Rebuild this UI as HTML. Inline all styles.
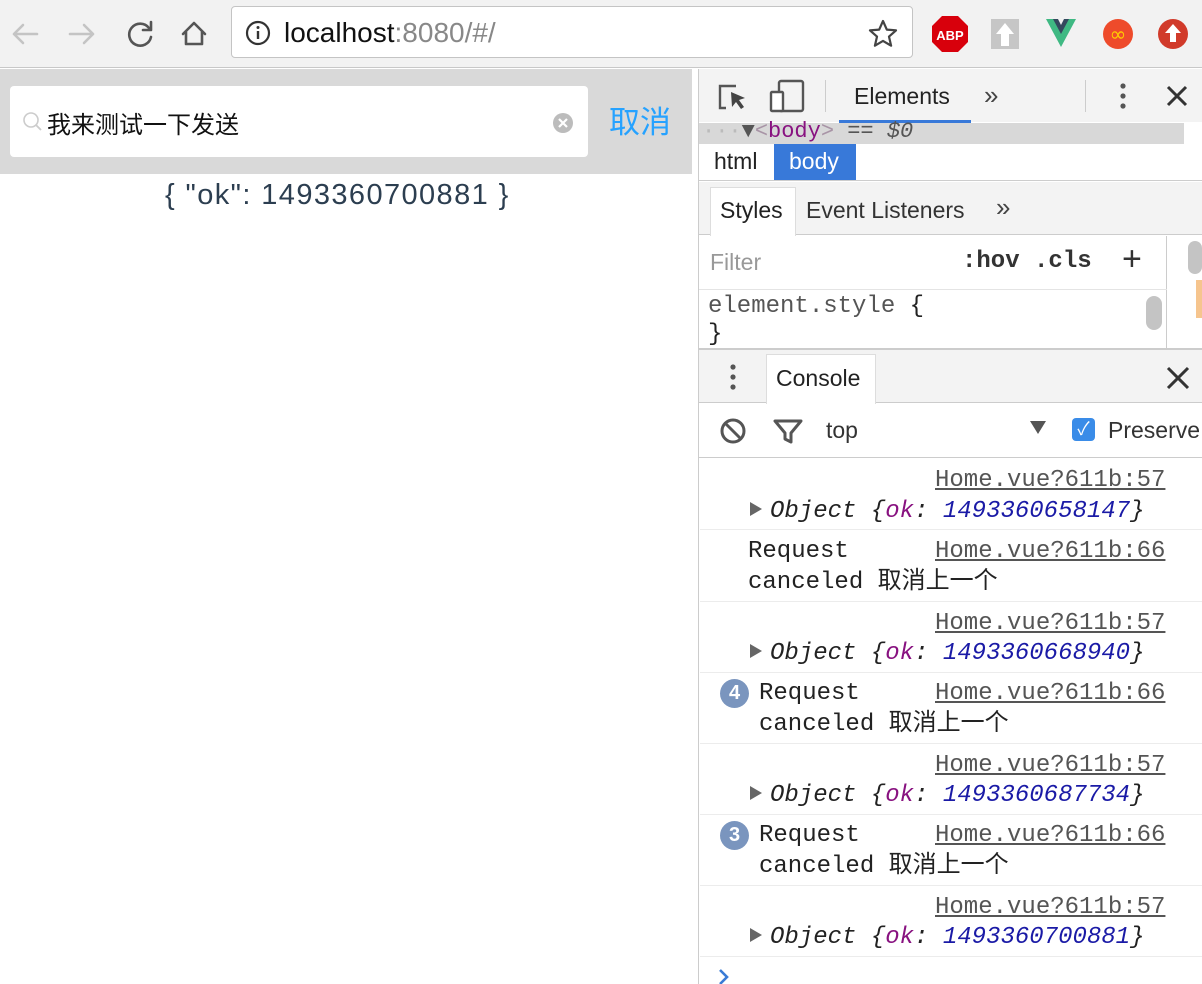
<!DOCTYPE html>
<html><head><meta charset="utf-8"><style>
*{margin:0;padding:0;box-sizing:border-box}
body{width:1202px;height:984px;overflow:hidden;position:relative;background:#fff;font-family:"Liberation Sans","Noto Sans CJK SC",sans-serif}
.a{position:absolute;white-space:nowrap}
.m{font-family:"Liberation Mono","Noto Sans CJK SC",monospace;font-size:24px;line-height:30px;color:#222}
.lk{color:#555;text-decoration:underline}
.row{position:absolute;left:700px;width:502px;height:71px;border-bottom:1px solid #ececec}
.tri{display:inline-block;width:0;height:0;border-left:12px solid #666;border-top:7px solid transparent;border-bottom:7px solid transparent;margin-right:8px;vertical-align:1px}
.badge{position:absolute;left:720px;width:29px;height:29px;border-radius:50%;background:#7a95be;color:#fff;font:bold 20px/29px "Liberation Sans",sans-serif;text-align:center}
</style></head><body>
<div class="a" style="left:0;top:0;width:1202px;height:68px;background:#f2f2f2;border-bottom:1px solid #c8c8c8"></div>
<svg class="a" style="left:0;top:0" width="230" height="68">
<g fill="none" stroke-width="2.6" stroke-linecap="round" stroke-linejoin="round">
<path d="M37 34H14M23 25l-9 9 9 9" stroke="#c4c4c4"/>
<path d="M70 34h23M84 25l9 9-9 9" stroke="#c4c4c4"/>
<path d="M149 28a11 11 0 1 0 2 9" stroke="#555"/><path d="M151 22v8h-8" stroke="#555"/>
<path d="M183 34l11-11 11 11M186 32v12h16V32" stroke="#555"/>
</g></svg>
<div class="a" style="left:231px;top:6px;width:682px;height:52px;background:#fff;border:1px solid #c4c4c4;border-radius:4px"></div>
<svg class="a" style="left:245px;top:20px" width="26" height="26"><circle cx="13" cy="13" r="11" fill="none" stroke="#333" stroke-width="2.2"/><rect x="11.8" y="11" width="2.4" height="8" fill="#333"/><circle cx="13" cy="7.5" r="1.5" fill="#333"/></svg>
<div class="a" style="left:284px;top:16px;font-size:28px;line-height:34px;color:#111">localhost<span style="color:#888">:8080/#/</span></div>
<svg class="a" style="left:868px;top:19px" width="30" height="28"><path d="M15 2l3.8 8.6 9.2.8-7 6.2 2.1 9.1L15 21.9l-8.1 4.8 2.1-9.1-7-6.2 9.2-.8z" fill="none" stroke="#444" stroke-width="2.2" stroke-linejoin="round"/></svg>
<svg class="a" style="left:930px;top:14px" width="270" height="40">
<polygon points="12,2 28,2 38,12 38,28 28,38 12,38 2,28 2,12" fill="#d8000c"/><text x="20" y="26" font-size="13" font-weight="bold" fill="#fff" text-anchor="middle" font-family="Liberation Sans">ABP</text>
<rect x="61" y="5" width="28" height="30" fill="#c6c6c6"/><path d="M75 9l-9 11h5v12h8V20h5z" fill="#fff"/>
<path d="M116 5h10l5 9 5-9h10l-15 28z" fill="#3fb983"/><path d="M123 5h5l3 6 3-6h5l-8 15z" fill="#34495e"/>
<circle cx="188" cy="20" r="15" fill="#ee4b2b"/><text x="188" y="27" font-size="20" fill="#ffcc00" text-anchor="middle" font-family="DejaVu Sans">∞</text>
<circle cx="243" cy="20" r="15" fill="#d13a2a"/><path d="M243 10l-8 9h5v9h6v-9h5z" fill="#fff"/>
</svg>
<div class="a" style="left:0;top:69px;width:692px;height:105px;background:#d9d9d9"></div>
<div class="a" style="left:10px;top:86px;width:578px;height:71px;background:#fff;border-radius:4px"></div>
<svg class="a" style="left:22px;top:111px" width="22" height="22"><circle cx="9" cy="9" r="7" fill="none" stroke="#ccc" stroke-width="1.6"/><path d="M14 14l5 5" stroke="#ccc" stroke-width="1.8"/></svg>
<div class="a" style="left:47px;top:111px;font-size:24px;line-height:30px;color:#111">我来测试一下发送</div>
<svg class="a" style="left:552px;top:112px" width="22" height="22"><circle cx="11" cy="11" r="10" fill="#bcbcbc"/><path d="M7 7l8 8M15 7l-8 8" stroke="#fff" stroke-width="2.2"/></svg>
<div class="a" style="left:609px;top:103px;font-size:31px;line-height:40px;color:#26a2ff">取消</div>
<div class="a" style="left:165px;top:178px;font-size:29px;line-height:34px;color:#2c3e50;letter-spacing:1.4px">{ "ok": 1493360700881 }</div>
<div class="a" style="left:692px;top:69px;width:7px;height:915px;background:#fff;border-right:1px solid #ccc"></div>
<div class="a" style="left:699px;top:69px;width:503px;height:53px;background:#f3f3f3"></div>
<svg class="a" style="left:715px;top:78px" width="90" height="36">
<path d="M21 8H5v22h6" fill="none" stroke="#555" stroke-width="2.4"/><path d="M16 14l14 6-6 2 5 7-3 2-5-7-4 5z" fill="#444"/>
<rect x="64" y="3" width="24" height="30" rx="2" fill="none" stroke="#555" stroke-width="2.4"/><rect x="56" y="14" width="12" height="19" rx="1" fill="#fff" stroke="#555" stroke-width="2.4"/>
</svg>
<div class="a" style="left:825px;top:80px;width:1px;height:32px;background:#ccc"></div>
<div class="a" style="left:854px;top:81px;font-size:23px;line-height:30px;color:#222">Elements</div>
<div class="a" style="left:839px;top:120px;width:132px;height:3px;background:#3879d9"></div>
<div class="a" style="left:984px;top:80px;font-size:26px;color:#444">»</div>
<div class="a" style="left:1085px;top:80px;width:1px;height:32px;background:#ccc"></div>
<svg class="a" style="left:1110px;top:82px" width="80" height="30"><g fill="#555"><circle cx="13" cy="4" r="2.6"/><circle cx="13" cy="14" r="2.6"/><circle cx="13" cy="24" r="2.6"/></g><path d="M58 5l18 18M76 5L58 23" stroke="#333" stroke-width="3"/></svg>
<div class="a" style="left:699px;top:123px;width:485px;height:21px;background:#d8d8d8"></div>
<div class="a m" style="left:702px;top:117px;font-size:22px;color:#bbb">···<span style="color:#555">▼</span><span style="color:#a894a6">&lt;</span><span style="color:#881280">body</span><span style="color:#a894a6">&gt;</span> <span style="color:#555">==</span> <i style="color:#555">$0</i></div>
<div class="a" style="left:699px;top:144px;width:503px;height:37px;background:#fff;border-bottom:1px solid #cdcdcd"></div>
<div class="a" style="left:714px;top:146px;font-size:23px;line-height:30px;color:#222">html</div>
<div class="a" style="left:774px;top:144px;width:82px;height:36px;background:#3879d9"></div>
<div class="a" style="left:789px;top:146px;font-size:23px;line-height:30px;color:#fff">body</div>
<div class="a" style="left:699px;top:182px;width:503px;height:53px;background:#f3f3f3;border-bottom:1px solid #ccc"></div>
<div class="a" style="left:710px;top:187px;width:86px;height:49px;background:#fff;border:1px solid #ddd;border-bottom:none"></div>
<div class="a" style="left:720px;top:195px;font-size:23px;line-height:30px;color:#222">Styles</div>
<div class="a" style="left:806px;top:195px;font-size:23px;line-height:30px;color:#333">Event Listeners</div>
<div class="a" style="left:996px;top:192px;font-size:26px;color:#444">»</div>
<div class="a" style="left:699px;top:236px;width:468px;height:112px;background:#fff;border-right:1px solid #ccc"></div>
<div class="a" style="left:710px;top:247px;font-size:23px;line-height:30px;color:#999">Filter</div>
<div class="a m" style="left:962px;top:247px;font-weight:bold;color:#333">:hov .cls</div>
<div class="a" style="left:1122px;top:240px;font-size:34px;color:#333">+</div>
<div class="a" style="left:699px;top:289px;width:468px;height:1px;background:#e4e4e4"></div>
<div class="a m" style="left:708px;top:292px;color:#555">element.style <span style="color:#222">{</span></div>
<div class="a m" style="left:708px;top:320px;color:#222">}</div>
<div class="a" style="left:1146px;top:296px;width:16px;height:34px;border-radius:8px;background:#c4c4c4"></div>
<div class="a" style="left:1188px;top:241px;width:14px;height:33px;border-radius:7px;background:#c4c4c4"></div>
<div class="a" style="left:1196px;top:280px;width:6px;height:38px;background:#f6c58e"></div>
<div class="a" style="left:699px;top:348px;width:503px;height:2px;background:#ccc"></div>
<div class="a" style="left:699px;top:350px;width:503px;height:53px;background:#f3f3f3;border-bottom:1px solid #ccc"></div>
<svg class="a" style="left:725px;top:363px" width="16" height="30"><g fill="#555"><circle cx="8" cy="4" r="2.6"/><circle cx="8" cy="14" r="2.6"/><circle cx="8" cy="24" r="2.6"/></g></svg>
<div class="a" style="left:766px;top:354px;width:110px;height:50px;background:#fff;border:1px solid #ddd;border-bottom:none"></div>
<div class="a" style="left:776px;top:363px;font-size:23px;line-height:30px;color:#222">Console</div>
<svg class="a" style="left:1166px;top:366px" width="24" height="24"><path d="M2 2l20 20M22 2L2 22" stroke="#333" stroke-width="3"/></svg>
<div class="a" style="left:699px;top:404px;width:503px;height:54px;background:#fff;border-bottom:1px solid #ccc"></div>
<svg class="a" style="left:718px;top:416px" width="90" height="30"><circle cx="15" cy="15" r="11" fill="none" stroke="#555" stroke-width="3"/><path d="M7 7l16 16" stroke="#555" stroke-width="3"/><path d="M57 5h26l-10 12v9l-6-3v-6z" fill="none" stroke="#555" stroke-width="3" stroke-linejoin="round"/></svg>
<div class="a" style="left:826px;top:415px;font-size:23px;line-height:30px;color:#333">top</div>
<div class="a" style="left:1030px;top:421px;width:0;height:0;border-left:8px solid transparent;border-right:8px solid transparent;border-top:13px solid #555"></div>
<div class="a" style="left:1072px;top:418px;width:23px;height:23px;border-radius:4px;background:#3a8ce8;color:#fff;font-size:18px;line-height:23px;text-align:center">✓</div>
<div class="a" style="left:1108px;top:415px;font-size:23px;line-height:30px;color:#333">Preserve</div>
<div class="row" style="top:459px"></div>
<div class="a m lk" style="left:935px;top:466px">Home.vue?611b:57</div>
<div class="a m" style="left:750px;top:497px"><span class="tri"></span><i>Object {<span style="color:#881280">ok</span>: <span style="color:#1a1aa6">1493360658147</span>}</i></div>
<div class="row" style="top:531px"></div>
<div class="a m lk" style="left:935px;top:537px">Home.vue?611b:66</div>
<div class="a m" style="left:748px;top:537px">Request</div>
<div class="a m" style="left:748px;top:568px">canceled 取消上一个</div>
<div class="row" style="top:602px"></div>
<div class="a m lk" style="left:935px;top:609px">Home.vue?611b:57</div>
<div class="a m" style="left:750px;top:639px"><span class="tri"></span><i>Object {<span style="color:#881280">ok</span>: <span style="color:#1a1aa6">1493360668940</span>}</i></div>
<div class="row" style="top:673px"></div>
<div class="badge" style="top:679px">4</div>
<div class="a m lk" style="left:935px;top:679px">Home.vue?611b:66</div>
<div class="a m" style="left:759px;top:679px">Request</div>
<div class="a m" style="left:759px;top:710px">canceled 取消上一个</div>
<div class="row" style="top:744px"></div>
<div class="a m lk" style="left:935px;top:751px">Home.vue?611b:57</div>
<div class="a m" style="left:750px;top:781px"><span class="tri"></span><i>Object {<span style="color:#881280">ok</span>: <span style="color:#1a1aa6">1493360687734</span>}</i></div>
<div class="row" style="top:815px"></div>
<div class="badge" style="top:821px">3</div>
<div class="a m lk" style="left:935px;top:821px">Home.vue?611b:66</div>
<div class="a m" style="left:759px;top:821px">Request</div>
<div class="a m" style="left:759px;top:852px">canceled 取消上一个</div>
<div class="row" style="top:886px"></div>
<div class="a m lk" style="left:935px;top:893px">Home.vue?611b:57</div>
<div class="a m" style="left:750px;top:923px"><span class="tri"></span><i>Object {<span style="color:#881280">ok</span>: <span style="color:#1a1aa6">1493360700881</span>}</i></div>
<svg class="a" style="left:716px;top:967px" width="16" height="17"><path d="M4 3l7 7-7 7" fill="none" stroke="#3a7bd5" stroke-width="2.6"/></svg>
</body></html>
